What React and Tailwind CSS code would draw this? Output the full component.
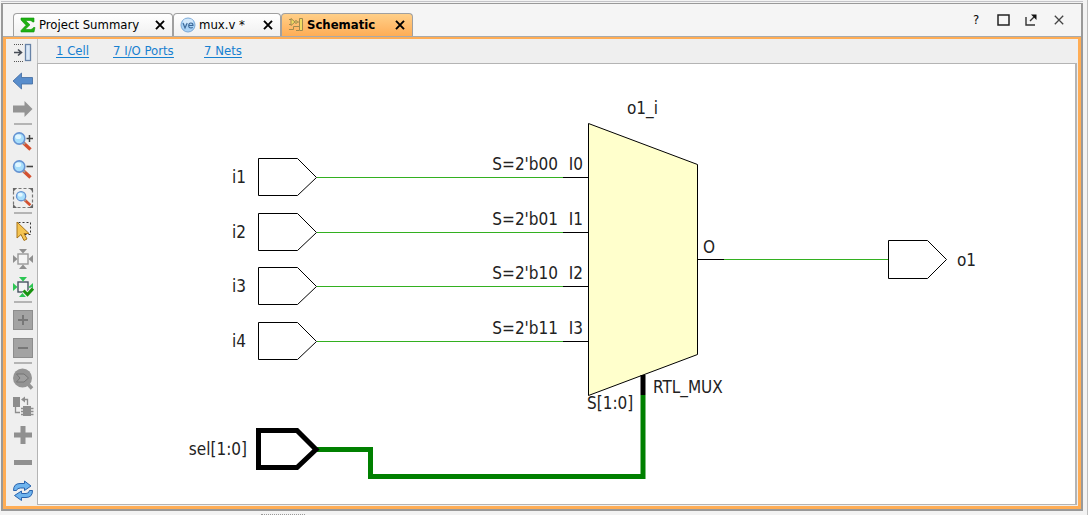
const UI = 'font-["DejaVu_Sans_Condensed","DejaVu_Sans",sans-serif]';

function SigmaIcon() {
  return (
    <svg width="16" height="16" viewBox="0 0 16 16">
      <path d="M1 1H14V5H12.5Q12 3.5 10 3.500H5.500L10 7.800 5 12.500H10.500Q12.500 12.500 13.500 10.500H15L14 15H1V13.500L6 8.300 1 3Z" fill="#1fb112" stroke="#0f930a" strokeWidth=".6" />
    </svg>
  );
}

function VerilogIcon() {
  return (
    <svg width="16" height="16" viewBox="0 0 16 16">
      <circle cx="8" cy="8" r="7" fill="#a9d2f5" stroke="#7aa8d6" />
      <ellipse cx="8" cy="4.5" rx="5" ry="2.8" fill="#d4e9fb" />
      <path d="M3 6L5 11 7.2 6M8.7 8.5H13Q13 6 10.9 6T8.7 8.5 11 11L12.8 10.4" fill="none" stroke="#3c6796" strokeWidth="1.1" />
    </svg>
  );
}

function SchematicIcon() {
  return (
    <svg width="16" height="16" viewBox="0 0 16 16" fill="none" stroke="#a08a50">
      <path d="M1 2.5H3M1 7.5H3M8 5H11M1 12.5H5.5V9.5H11" />
      <path d="M3 1.5L7 5 3 8.5Z" fill="#f1dc62" />
      <circle cx="8" cy="5" r="1.3" fill="#f1dc62" />
      <path d="M11.5 1.5H14.5V13.5H11.5Z" fill="#f1dc62" />
      <path d="M8 13.5H11" />
    </svg>
  );
}

function CloseIcon() {
  return (
    <svg width="10" height="10" viewBox="0 0 10 10" fill="none" stroke="#000" strokeWidth="1.9">
      <path d="M1 .8L9 9.2M9 .8L1 9.2" />
    </svg>
  );
}

function Magnifier({ children, small }) {
  return (
    <svg width="22" height="22" viewBox="0 0 22 22">
      <g transform={small ? "translate(3.2 3) scale(.82)" : undefined}>
        <path d="M11 11.5L18.5 18.5" stroke="#d4502f" strokeWidth="3.4" />
        <path d="M10.5 11L13 13.3" stroke="#9a9a9a" strokeWidth="2.2" />
        <circle cx="7.2" cy="7.5" r="5.6" fill="#a8defb" stroke="#6593d2" strokeWidth="1.6" />
        <ellipse cx="6.2" cy="5.8" rx="3" ry="2.3" fill="#e0f6ff" />
      </g>
      {children}
    </svg>
  );
}

function Ports({ color, box }) {
  return (
    <g>
      <rect x="6" y="6" width="10" height="10" fill="#f4f4f4" stroke={box} strokeWidth="1.4" />
      <path d="M7 1H15L11 5.5ZM1 7V15L5.5 11ZM21 7V15L16.5 11ZM7 21H15L11 16.5Z" fill={color} />
    </g>
  );
}

function Svg({ children }) {
  return <svg width="22" height="22" viewBox="0 0 22 22">{children}</svg>;
}

const groups = [
  [
    ["Auto-hide panel", <Svg><path d="M2 2.500H12M2 19.500H12" stroke="#555" strokeDasharray="1 1" /><path d="M2 10.500H9M6 7.500L9.500 10.500 6 13.500" fill="none" stroke="#454b55" strokeWidth="1.600" /><rect x="13.500" y="2.500" width="5" height="16" fill="#dbe9f8" stroke="#6782a6" strokeWidth="1.300" /></Svg>],
    ["Previous", <Svg><path d="M1 11L9.500 3V7.500H20.500V14H9.500V19Z" fill="#588dcc" stroke="#40699f" strokeWidth=".8" /></Svg>],
    ["Next", <Svg><path d="M20.500 11L12.500 3V7.500H1V14.500H12.500V19Z" fill="#949494" /></Svg>],
  ],
  [
    ["Zoom in", <Magnifier><path d="M14.500 7.500H21M17.500 4V11" stroke="#444" strokeWidth="1.500" /></Magnifier>],
    ["Zoom out", <Magnifier><path d="M14.500 7.500H21" stroke="#444" strokeWidth="1.600" /></Magnifier>],
    ["Zoom to fit", <Magnifier small><path d="M1.500 1.500H20.500V20.500H1.500Z" fill="none" stroke="#777" strokeWidth="1.200" strokeDasharray="3 2" /><path d="M1 1H5L1 5ZM17 1H21V5ZM1 17V21H5ZM21 17V21H17Z" fill="#666" /></Magnifier>],
  ],
  [
    ["Select area", <Svg><rect x="6.500" y="2.500" width="12" height="12" fill="none" stroke="#333" strokeDasharray="2 2" /><path d="M5 2V18L9 14.500 12 20.500 15 19 12 13.500H17Z" fill="#f5c451" stroke="#a8751b" /></Svg>],
    ["Fit selection", <Svg><Ports color="#8f8f8f" box="#999" /></Svg>],
    ["Autofit selection", <Svg><Ports color="#2cc653" box="#465361" /><path d="M12 15L15.500 19 21 12.500" fill="none" stroke="#efefef" strokeWidth="5" /><path d="M11.500 14.500L15.500 18.500 21 12.500" fill="none" stroke="#18920f" strokeWidth="3" /></Svg>],
  ],
  [
    ["Expand", <Svg><rect x="1.500" y="1.500" width="19" height="19" fill="#a3a3a3" stroke="#8d8d8d" /><path d="M6 11H16M11 6V16" stroke="#777" strokeWidth="2" /></Svg>],
    ["Collapse", <Svg><rect x="1.500" y="1.500" width="19" height="19" fill="#a3a3a3" stroke="#8d8d8d" /><path d="M6 11H16" stroke="#777" strokeWidth="2" /></Svg>],
  ],
  [
    ["Find cone", <Svg><path d="M15 15L20 20.500" stroke="#949494" strokeWidth="3.500" /><circle cx="10.500" cy="10" r="9.500" fill="#949494" /><path d="M4.500 6H12L16.500 10 12 14H4.500L8 10Z" fill="#9f9f9f" stroke="#757575" /></Svg>],
    ["Replace cell", <Svg><path d="M1 1H8V11H1ZM11 10H19V20H11Z" fill="#8d8d8d" /><path d="M9 12.500H11M9 15.500H11M9 18.500H11M19 12.500H21.500M19 15.500H21.500M19 18.500H21.500M3.500 11V16.500H8M11 3.500H15.500V9" fill="none" stroke="#8d8d8d" strokeWidth="1.300" /><path d="M9 3.500L13 .5V6.500Z" fill="#8d8d8d" /></Svg>],
    ["Add", <Svg><path d="M2 11H20M11 2V20" stroke="#909090" strokeWidth="5" /></Svg>],
    ["Remove", <Svg><path d="M2 10.500H20" stroke="#909090" strokeWidth="5" /></Svg>],
    ["Refresh", <Svg><g fill="#6fb4ee" stroke="#2963ad" strokeWidth="1" strokeLinejoin="round"><path d="M1.500 10.500Q1.500 3.500 8 3.500H12.500V1L19 6 12.500 10.500V8H8.500Q5 8 4.500 10.500Z" /><path d="M20.500 10.500Q20.500 17.500 14 17.500H9.500V20.500L2.500 15.500 9.500 11V13.500H14Q17 13.500 17.500 10.500Z" /></g></Svg>],
  ],
];

const tabs = [
  { name: "Project Summary", icon: <SigmaIcon />, width: "w-40" },
  { name: "mux.v *", icon: <VerilogIcon />, width: "w-[108px]" },
  { name: "Schematic", icon: <SchematicIcon />, width: "w-[132px]", active: true },
];

const inputs = [
  { name: "i1", y: 113, pin: "I0", select: "S=2'b00" },
  { name: "i2", y: 168, pin: "I1", select: "S=2'b01" },
  { name: "i3", y: 222, pin: "I2", select: "S=2'b10" },
  { name: "i4", y: 277, pin: "I3", select: "S=2'b11" },
];

function Schematic() {
  return (
    <svg viewBox="0 0 1037 440" className="block h-auto w-full text-[17px]" fill="#222" role="img" aria-label="Schematic">
      <g fill="none" stroke="#000">
        <path d="M550.500 59.500L659.500 100.500V290.500L550.500 331.500Z" fill="#ffffcc" />
        {inputs.map(({ name, y }) => (
          <g key={name}>
            <path d={`M220.500 ${y - 18.5}H259.500L278.500 ${y + 0.5} 259.500 ${y + 18.5}H220.500Z`} />
            <path d={`M279 ${y + 0.5}H525`} stroke="#33b020" />
            <path d={`M525 ${y + 0.5}H551`} />
          </g>
        ))}
        <path d="M660 195.500H686" />
        <path d="M686 195.500H850" stroke="#33b020" />
        <path d="M850.500 176.500H889.500L908.500 195.500 889.500 214.500H850.500Z" />
      </g>
      <path d="M278 385.500H332.500V412.500H605V331" fill="none" stroke="#008000" strokeWidth="5" />
      <path d="M605 311V331" fill="none" stroke="#000" strokeWidth="5" />
      <path d="M220.500 366.500H259L278 385.500 259 403.500H220.500Z" fill="none" stroke="#000" strokeWidth="5" />
      {inputs.map(({ name, y, pin, select }) => (
        <g key={name} textAnchor="end">
          <text x="208" y={y + 6}>{name}</text>
          <text x="520" y={y - 7}>{select}</text>
          <text x="545" y={y - 7}>{pin}</text>
        </g>
      ))}
      <text x="209" y="391" textAnchor="end">sel[1:0]</text>
      <text x="589" y="50">o1_i</text>
      <text x="665" y="189">O</text>
      <text x="919" y="202">o1</text>
      <text x="615" y="329">RTL_MUX</text>
      <text x="549" y="345">S[1:0]</text>
    </svg>
  );
}

export default function App() {
  return (
    <div className={`min-h-screen border-r border-[#bdbdbd] bg-[#f3f3f3] pr-1 pl-px text-[13px] text-black ${UI}`}>
      <div className="mb-px h-0.5 border-b border-[#c4c4c8]" />
      <main className="border-2 border-t border-[#999] bg-[#f5f5f5]">
        <header className="flex h-8 items-end justify-between pl-[10px]">
          <div className="flex" role="tablist">
            {tabs.map(({ name, icon, width, active }) => (
              <div
                key={name}
                className={`flex h-[23px] items-center justify-between rounded-t border border-b-0 border-[#a0a0a0] pr-[7px] pl-[6px] ${width} ${active ? "bg-linear-to-b from-[#ffcf88] to-[#ffad55] font-bold" : "bg-linear-to-b from-white to-[#f0f0f0]"}`}
              >
                <button role="tab" aria-selected={!!active} className="flex items-center gap-[3px] whitespace-nowrap">
                  {icon}
                  {name}
                </button>
                <button aria-label={`Close ${name}`}><CloseIcon /></button>
              </div>
            ))}
          </div>
          <div className="flex items-center gap-[15px] self-center pr-[17px]">
            <button aria-label="Help" className="w-3">?</button>
            <button aria-label="Maximize"><svg width="13" height="12" viewBox="0 0 13 12"><path d="M1 1H12V11H1Z" fill="none" stroke="#222" strokeWidth="1.500" /></svg></button>
            <button aria-label="Float"><svg width="12" height="12" viewBox="0 0 12 12"><path d="M1 3V11H10M5 7L9 3" fill="none" stroke="#333" strokeWidth="1.400" /><path d="M6 .5H11.500V6Z" fill="#111" /></svg></button>
            <button aria-label="Close panel" className="pl-0.5"><svg width="10" height="10" viewBox="0 0 10 10"><path d="M.8.8L9.200 9.200M9.200.8L.8 9.200" fill="none" stroke="#444" strokeWidth="1.300" /></svg></button>
          </div>
        </header>
        <div className="border-t border-[#aaa]">
          <div className="flex border-[3px] border-t-2 border-[#ffad55] bg-[#efefef] pb-px">
            <aside className="flex w-[31px] shrink-0 flex-col items-center pl-0.5">
              {groups.map((group, index) => (
                <div key={index} className="flex flex-col items-center">
                  {index > 0 && <hr className={`h-0.5 w-[18px] border-0 bg-[#b4b4b4] ${index === 4 ? "mb-px" : "mb-[3px]"}`} />}
                  {group.map(([label, icon]) => (
                    <button key={label} aria-label={label} className="flex h-7 w-7 items-center justify-center">{icon}</button>
                  ))}
                </div>
              ))}
            </aside>
            <div className="flex min-w-0 grow flex-col">
              <nav className="flex h-6 items-center gap-6 border-l border-[#c4c4c4] pl-[18px] text-[#1680d0] underline underline-offset-2">
                <a href="#cells">1 Cell</a>
                <a href="#ports" className="w-[67px]">7 I/O Ports</a>
                <a href="#nets">7 Nets</a>
              </nav>
              <div className="mr-px border border-r-2 border-[#b4b4b4] bg-white">
                <Schematic />
              </div>
            </div>
          </div>
        </div>
      </main>
      <div className="mt-[3px] ml-[260px] w-11 border-t border-dotted border-[#999]" />
    </div>
  );
}
